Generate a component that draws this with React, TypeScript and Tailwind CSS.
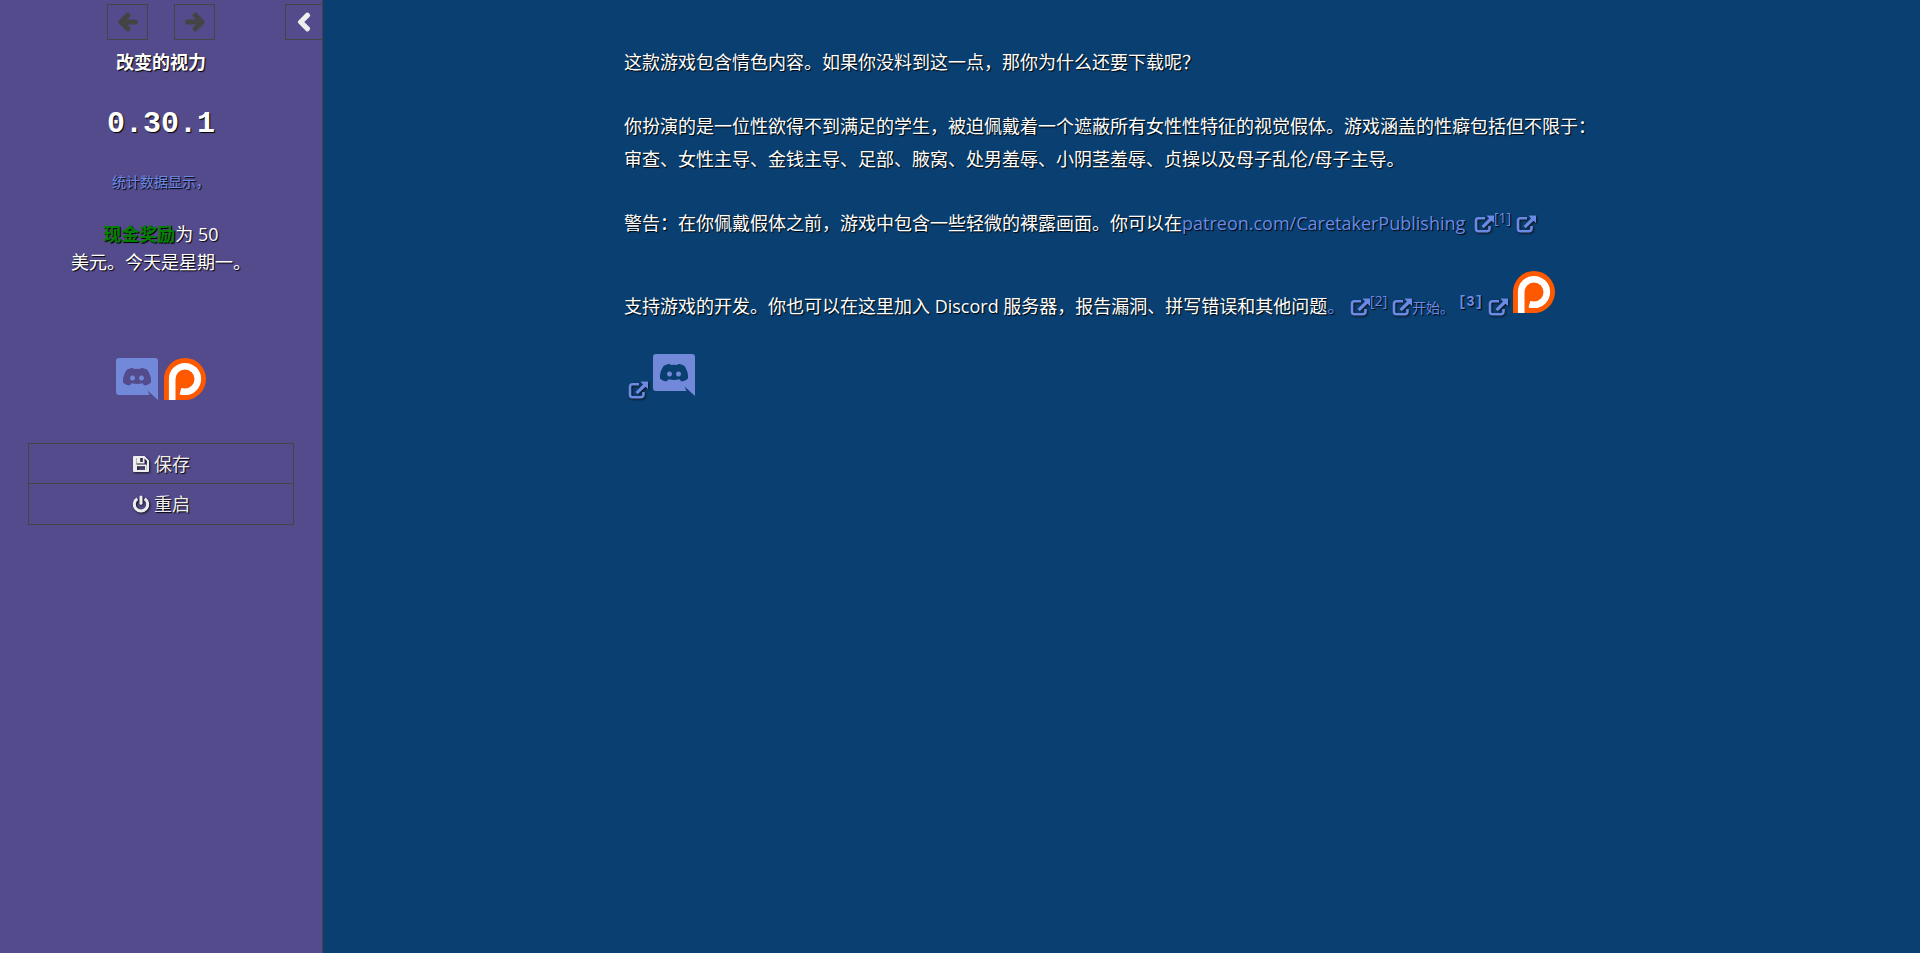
import React, { useState } from 'react';
import { FaArrowLeft, FaArrowRight, FaChevronLeft } from 'react-icons/fa';

const textShadow = 'text-shadow-[1px_1px_1px_#000]';
const iconShadow = 'drop-shadow-[1px_1px_1px_#111]';

const DiscordLogo: React.FC = () => (
  <svg viewBox="0 0 42 42" className="inline-block size-[42px] align-baseline" aria-hidden="true">
    <path
      fill="#7289da"
      fillRule="evenodd"
      d="M3 0H39a3 3 0 0 1 3 3V42L31.500 32.500L33.500 37H3a3 3 0 0 1-3-3V3a3 3 0 0 1 3-3Z
        M10.500 12C13 10.500 15 10 17 10L17.800 11Q21 10.600 24.200 11L25 10C27 10 29 10.500 31.500 12C34 16 35.500 20 35 24.500C33 26.500 30.500 27.300 28 27.300L26.500 25.200Q21 26.800 15.500 25.200L14 27.300C11.500 27.300 9 26.500 7 24.500C6.500 20 8 16 10.500 12Z
        M16.500 17.500a2.500 2.500 0 1 0 .01 0Z
        M25.500 17.500a2.500 2.500 0 1 0 .01 0Z"
    />
  </svg>
);

const PatreonLogo: React.FC = () => (
  <svg viewBox="0 0 42 42" className="inline-block size-[42px] align-baseline" aria-hidden="true">
    <path fill="#ff5900" d="M0 42V21a21 21 0 1 1 21 21Z" />
    <path fill="none" stroke="#fff" strokeWidth="6.600" d="M8.200 42V21a12.800 12.800 0 1 1 12.800 12.800q-2.400 0-4.600-.6" />
  </svg>
);

const ExternalIcon: React.FC = () => (
  <svg viewBox="0 0 20 18" className={`inline-block h-[18px] w-5 align-[-3px] ${iconShadow}`} aria-hidden="true">
    <path fill="none" stroke="#6b8ae6" strokeWidth="2.600" d="M11 3.300H4.500A2.500 2.500 0 0 0 2 5.800v8A2.500 2.500 0 0 0 4.500 16.300h8.500a2.500 2.500 0 0 0 2.500-2.500V11" />
    <path fill="#6b8ae6" d="M12.500 .5H20V8L17.500 5.700L9.700 13.200L7.500 11L15 3.400Z" />
  </svg>
);

const SaveIcon: React.FC = () => (
  <svg viewBox="0 0 18 18" className={`size-[18px] ${iconShadow}`} aria-hidden="true">
    <path
      fill="#eee"
      fillRule="evenodd"
      d="M2 1H12.500L17 5.500V16a1 1 0 0 1-1 1H2a1 1 0 0 1-1-1V2a1 1 0 0 1 1-1Z
        M5 11.200H13V15H5Z
        M3 3H4.500V8.500H12.500V3.600L15 6V15H14.800V10.500a1 1 0 0 0-1-1H4.200a1 1 0 0 0-1 1V15H3Z
        M8.300 3H10.800V7H8.300Z"
    />
    <path fill="#eee" d="M3 3H4.500V15H3Z" />
  </svg>
);

const PowerIcon: React.FC = () => (
  <svg viewBox="0 0 18 18" className={`size-[18px] ${iconShadow}`} fill="none" stroke="#eee" strokeWidth="3" aria-hidden="true">
    <path d="M5.300 3.700a6.700 6.700 0 1 0 7.400 0" />
    <path strokeLinecap="round" d="M9 2V8.200" />
  </svg>
);

const historyButton = 'flex h-9 w-[41px] items-center justify-center border border-[#444] text-xl text-[#444]';
const boldIcon = 'stroke-current stroke-[50px] overflow-visible';
const menuButton = `flex h-10 w-full items-center justify-center gap-1 text-lg text-[#eee] ${textShadow}`;

const App: React.FC = () => {
  const [stowed, setStowed] = useState(false);

  return (
    <div className="flex min-h-screen bg-[#093f71] font-['Open_Sans','Noto_Sans_CJK_SC',sans-serif] text-lg text-[#eee]">
      <aside className={`shrink-0 overflow-hidden border-r border-[#444] bg-[#544b8d] ${stowed ? 'w-10' : 'w-[323px]'}`}>
        {/* History controls */}
        <div className="flex justify-end pt-1">
          <button className={historyButton} aria-label="后退" disabled><FaArrowLeft className={boldIcon} /></button>
          <button className={`${historyButton} ml-[26px]`} aria-label="前进" disabled><FaArrowRight className={boldIcon} /></button>
          <button
            className="ml-[70px] flex h-9 w-[37px] items-center justify-center border border-r-0 border-[#444] text-xl text-[#eee]"
            aria-label="收起侧栏"
            onClick={() => setStowed(!stowed)}
          >
            <FaChevronLeft className={boldIcon} />
          </button>
        </div>

        <div className="flex flex-col items-center px-7 text-center text-white">
          <h1 className={`mt-2 font-bold leading-7 ${textShadow}`}>改变的视力</h1>
          <p className={`mt-7 font-['Liberation_Mono',monospace] text-3xl font-bold leading-10 ${textShadow}`}>0.30.1</p>
          <a href="#stats" className={`mt-6 text-sm leading-7 text-[#6b8ae6] ${textShadow}`}>统计数据显示，</a>
          <p className={`mt-6 leading-7 ${textShadow}`}>
            <b className="text-[#008000]">现金奖励</b>为 50
            <br />
            美元。今天是星期一。
          </p>

          <div className="mt-[82px] flex gap-1.5">
            <a href="#discord" aria-label="Discord"><DiscordLogo /></a>
            <a href="#patreon" aria-label="Patreon"><PatreonLogo /></a>
          </div>

          <nav className="mt-9 w-full divide-y divide-[#444] border border-[#444]">
            <button className={menuButton}><SaveIcon />保存</button>
            <button className={menuButton}><PowerIcon />重启</button>
          </nav>
        </div>
      </aside>

      <main className={`flex-1 pl-[301px] pr-[270px] pt-[46px] leading-[33px] text-white ${textShadow}`}>
        <p>这款游戏包含情色内容。如果你没料到这一点，那你为什么还要下载呢？</p>
        <p className="mt-[31px]">
          你扮演的是一位性欲得不到满足的学生，被迫佩戴着一个遮蔽所有女性性特征的视觉假体。游戏涵盖的性癖包括但不限于：
          <br />
          审查、女性主导、金钱主导、足部、腋窝、处男羞辱、小阴茎羞辱、贞操以及母子乱伦/母子主导。
        </p>
        <p className="mt-[31px]">
          警告：在你佩戴假体之前，游戏中包含一些轻微的裸露画面。你可以在
          <a href="#patreon" className="text-[#6b8ae6]">
            patreon.com/CaretakerPublishing <span className="ml-1"><ExternalIcon /></span>
            <sup className="text-sm">[1]</sup> <ExternalIcon />
          </a>
        </p>
        <p className="mt-[31px]">
          支持游戏的开发。你也可以在这里加入 Discord 服务器，报告漏洞、拼写错误和其他问题
          <a href="#discord" className="text-[#6b8ae6]">
            。 <ExternalIcon /><sup className="text-sm">[2]</sup> <ExternalIcon />
          </a>
          <a href="#start" className="text-[#6b8ae6]">
            <span className="text-sm">开始。</span>
            <sup className="ml-1 font-['Liberation_Mono',monospace] text-sm font-bold">[3]</sup> <ExternalIcon /> <PatreonLogo />
          </a>
        </p>
        <p className="mt-[31px]">
          <a href="#discord" className="ml-1" aria-label="Discord"><ExternalIcon /> <DiscordLogo /></a>
        </p>
      </main>
    </div>
  );
};

export default App;
